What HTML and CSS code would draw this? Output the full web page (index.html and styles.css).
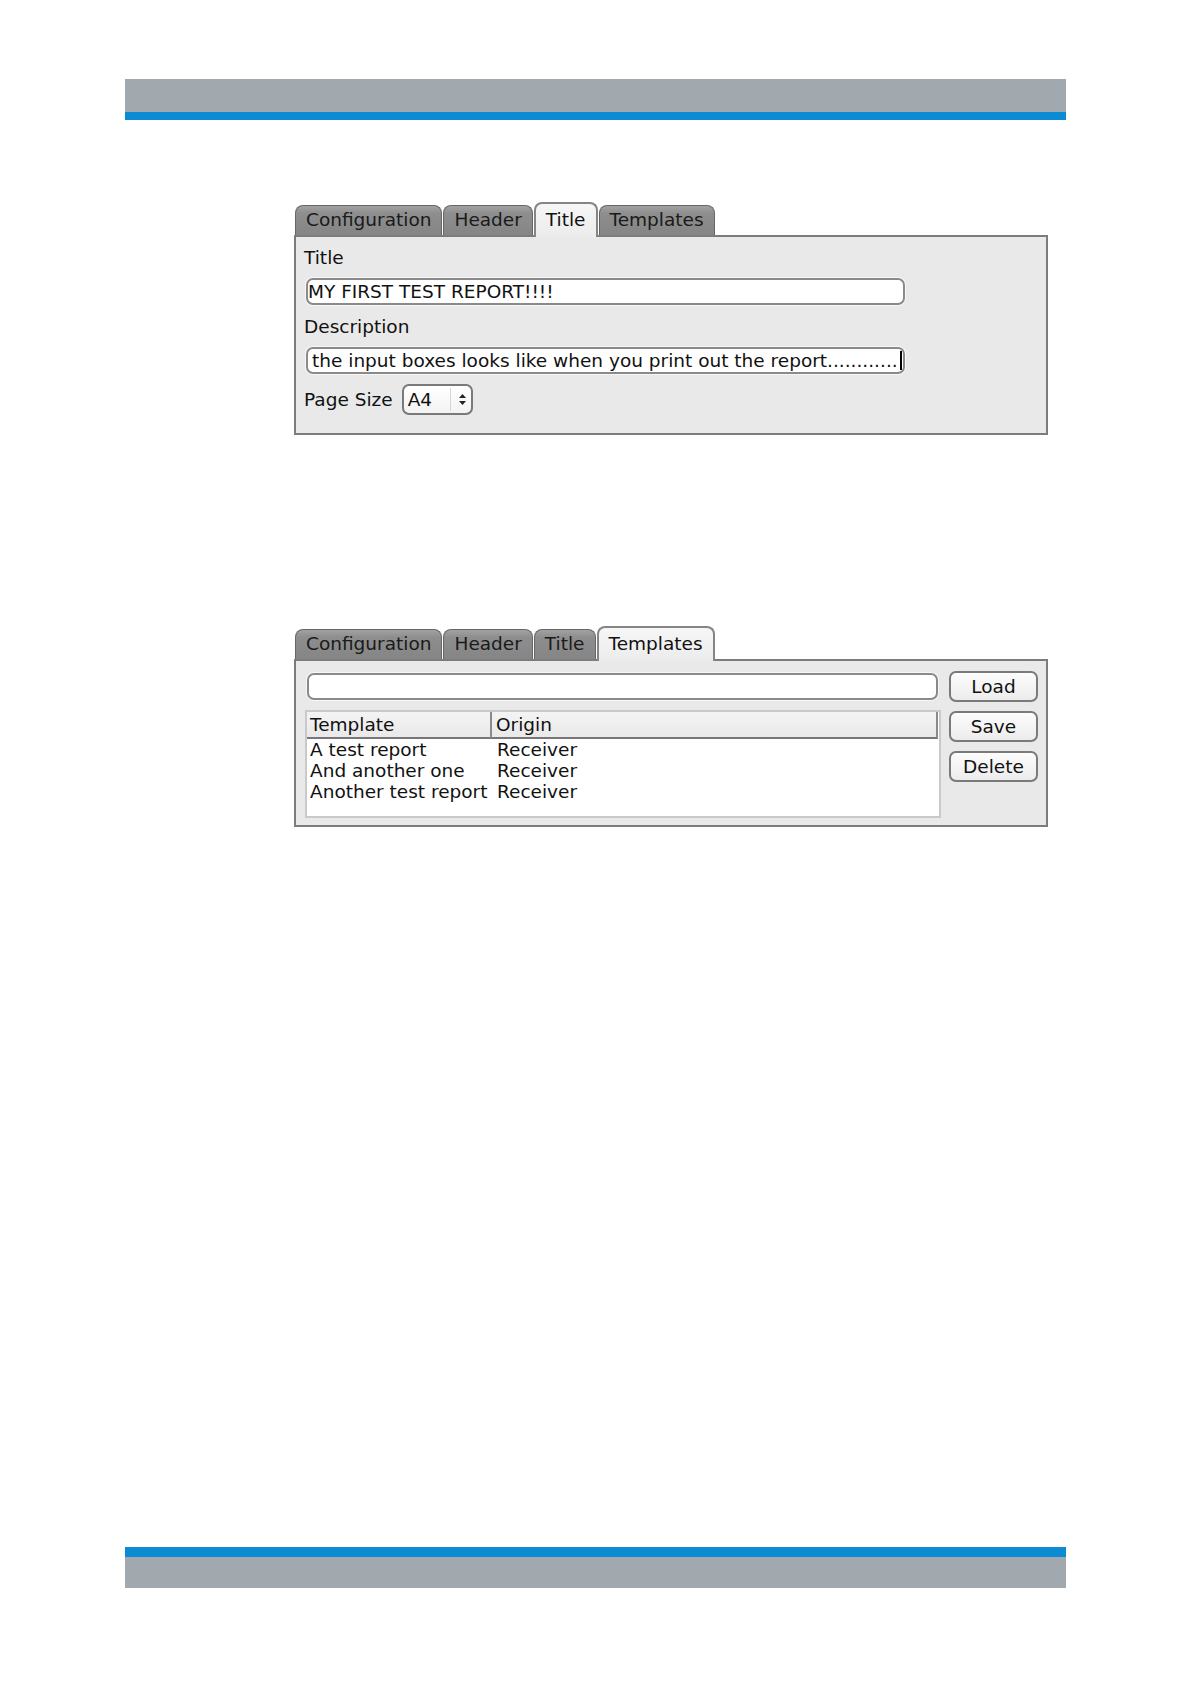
FILE: index.html
```html
<!DOCTYPE html>
<html lang="en">
<head>
<meta charset="utf-8">
<title>Report settings</title>
<link rel="stylesheet" href="styles.css">
</head>
<body>
<div class="page">
  <div class="bar bar-top"><div class="bar-gray"></div><div class="bar-blue"></div></div>

  <div class="widget widget-title">
    <div class="tabs">
      <div class="tab">Configuration</div>
      <div class="tab">Header</div>
      <div class="tab active">Title</div>
      <div class="tab">Templates</div>
    </div>
    <div class="panel panel-title">
      <div class="label">Title</div>
      <div class="field field-title"><span class="ftext">MY FIRST TEST REPORT!!!!</span></div>
      <div class="label label-gap">Description</div>
      <div class="field field-desc"><span class="ftext">the input boxes looks like when you print out the report............</span><span class="caret"></span></div>
      <div class="size-row">
        <span class="label">Page Size</span>
        <div class="select">
          <span class="select-value">A4</span>
          <span class="select-sep"></span>
          <svg class="select-arrows" width="9" height="13" viewBox="0 0 9 13"><path d="M4.5 1 L8 5 H1 Z M4.5 12 L8 8 H1 Z" fill="#222"/></svg>
        </div>
      </div>
    </div>
  </div>

  <div class="widget widget-templates">
    <div class="tabs">
      <div class="tab">Configuration</div>
      <div class="tab">Header</div>
      <div class="tab">Title</div>
      <div class="tab active">Templates</div>
    </div>
    <div class="panel panel-templates">
      <div class="tpl-main">
        <div class="field field-search"></div>
        <div class="table">
          <div class="thead">
            <div class="th th-first">Template</div>
            <div class="th">Origin</div>
          </div>
          <div class="tbody">
            <div class="td">A test report</div><div class="td td-origin">Receiver</div>
            <div class="td">And another one</div><div class="td td-origin">Receiver</div>
            <div class="td">Another test report</div><div class="td td-origin">Receiver</div>
          </div>
        </div>
      </div>
      <div class="tpl-buttons">
        <div class="btn">Load</div>
        <div class="btn">Save</div>
        <div class="btn">Delete</div>
      </div>
    </div>
  </div>

  <div class="bar bar-bottom"><div class="bar-blue"></div><div class="bar-gray"></div></div>
</div>
</body>
</html>
```

FILE: styles.css
```css
html, body {
  margin: 0;
  padding: 0;
  background: #ffffff;
}

.page {
  width: 1191px;
  height: 1684px;
  padding-top: 79px;
  box-sizing: border-box;
  font-family: "DejaVu Sans", Verdana, sans-serif;
  font-size: 18.5px;
  color: #111111;
}

.bar {
  margin-left: 125px;
  width: 941px;
}
.bar-top .bar-gray { height: 33px; background: #a1a9ae; }
.bar-top .bar-blue { height: 8px; background: #0b8bd2; }
.bar-bottom { margin-top: 720px; }
.bar-bottom .bar-blue { height: 10px; background: #0b8bd2; }
.bar-bottom .bar-gray { height: 31px; background: #a1a9ae; }

.widget {
  margin-left: 294px;
  width: 754px;
}
.widget-title { margin-top: 82px; }
.widget-templates { margin-top: 191px; }

.tabs {
  display: flex;
  align-items: flex-end;
  height: 33px;
  padding-left: 1px;
  position: relative;
  z-index: 1;
}

.tab {
  height: 30px;
  box-sizing: border-box;
  padding: 0 10px;
  margin-right: 1px;
  line-height: 28px;
  border: 1px solid #666666;
  border-bottom: none;
  border-radius: 8px 8px 0 0;
  background: linear-gradient(#a2a2a2 0%, #8e8e8e 25%, #858585 100%);
  color: #1a1a1a;
  white-space: nowrap;
}

.tab.active {
  height: 35px;
  margin-bottom: -2px;
  line-height: 31px;
  border: 2px solid #858585;
  border-bottom: none;
  background: linear-gradient(#f6f6f6, #ececec);
  color: #111111;
}

.panel {
  border: 2px solid #7c7c7c;
  background: #e9e9e9;
}

.panel-title {
  padding: 10px 8px 18px 8px;
}

.label {
  line-height: 21px;
  height: 21px;
  white-space: nowrap;
}
.label-gap { margin-top: 11px; }

.field {
  box-sizing: border-box;
  height: 27px;
  margin-top: 10px;
  margin-left: 2px;
  width: 599px;
  border: 2px solid #8a8a8a;
  border-radius: 7px;
  background: #ffffff;
  box-shadow: 0 0 0 1px #f7f7f7;
  display: flex;
  align-items: center;
  overflow: hidden;
  line-height: 23px;
  white-space: nowrap;
}
.field-title { padding-left: 0; }
.field-desc { padding-left: 4px; padding-right: 1px; }
.ftext {
  flex: 0 1 auto;
  min-width: 0;
}
.caret {
  flex: 0 0 2px;
  width: 2px;
  height: 19px;
  margin-left: auto;
  background: #000000;
}

.size-row {
  display: flex;
  align-items: center;
  gap: 9px;
  margin-top: 10px;
  height: 31px;
}

.select {
  box-sizing: border-box;
  width: 71px;
  height: 31px;
  border: 2px solid #7a7a7a;
  border-radius: 7px;
  background: linear-gradient(#ffffff, #f3f3f3);
  display: flex;
  align-items: center;
  padding-left: 4px;
}
.select-value { width: 42px; line-height: 27px; }
.select-sep {
  width: 1px;
  height: 23px;
  background: #d6d6d6;
  margin-right: 7px;
}
.select-arrows { display: block; }

.panel-templates {
  display: flex;
  gap: 8px;
  padding: 10px 8px 7px 9px;
}

.tpl-main {
  flex: 1 1 auto;
  padding-top: 2px;
}

.field-search {
  width: auto;
  margin: 0 3px 0 2px;
}

.table {
  box-sizing: border-box;
  height: 108px;
  margin-top: 10px;
  border: 2px solid #c9c9c9;
  background: #ffffff;
}

.thead {
  display: grid;
  grid-template-columns: 185px 1fr;
  height: 27px;
  box-sizing: border-box;
  border-bottom: 2px solid #777777;
  border-right: 2px solid #8a8a8a;
  margin-right: 1px;
  background: linear-gradient(#f4f4f4, #e9e9e9);
}
.th {
  line-height: 26px;
  padding-left: 4px;
  white-space: nowrap;
}
.th-first {
  padding-left: 3px;
  border-right: 2px solid #8a8a8a;
}

.tbody {
  display: grid;
  grid-template-columns: 187px 1fr;
}
.td {
  line-height: 21px;
  padding-left: 3px;
  white-space: nowrap;
}
.td-origin { padding-left: 3px; }

.tpl-buttons {
  flex: 0 0 89px;
  display: flex;
  flex-direction: column;
  gap: 9px;
}

.btn {
  box-sizing: border-box;
  height: 31px;
  border: 2px solid #7a7a7a;
  border-radius: 7px;
  background: linear-gradient(#fcfcfc, #ececec);
  text-align: center;
  line-height: 27px;
}
```
